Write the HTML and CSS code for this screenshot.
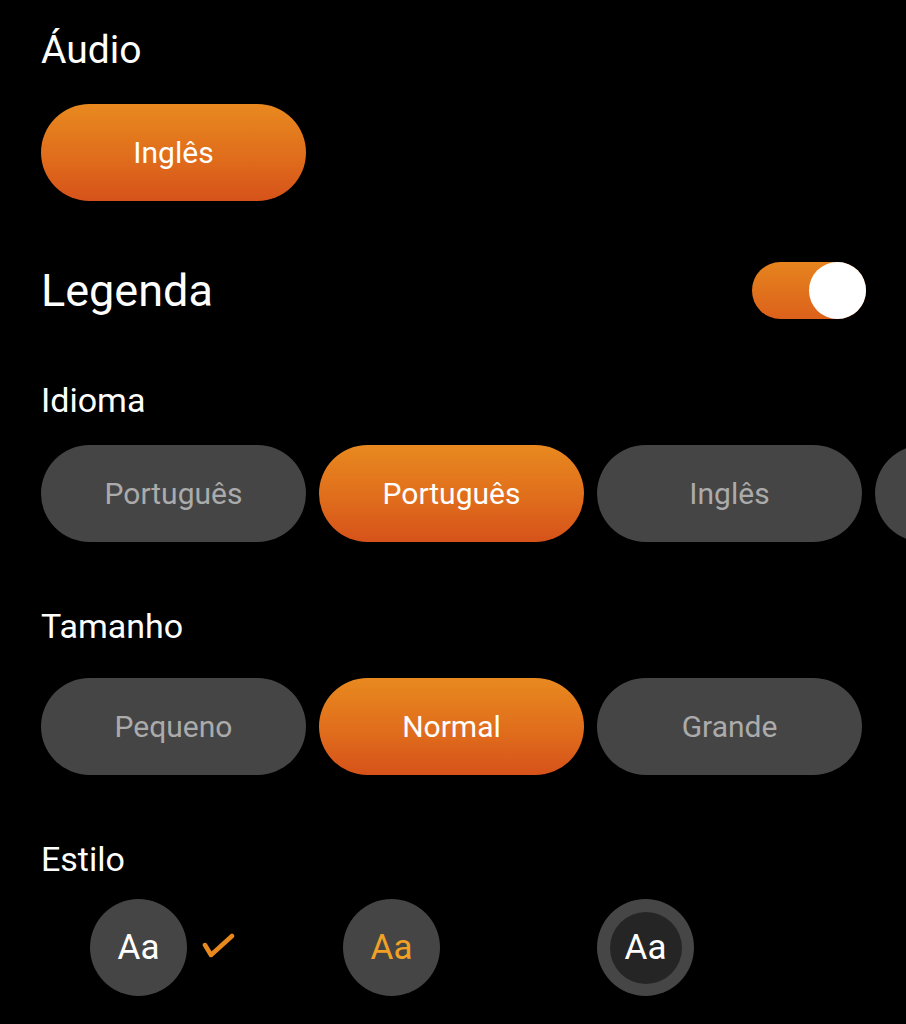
FILE: index.html
```html
<!DOCTYPE html>
<html lang="pt">
<head>
<meta charset="utf-8">
<title>Áudio e legenda</title>
<link rel="stylesheet" href="styles.css">
</head>
<body>
<main class="page">
  <h2 class="title-audio">Áudio</h2>
  <div class="chips chips-audio">
    <div class="chip active">Inglês</div>
  </div>

  <div class="legend-row">
    <h1 class="title-legend">Legenda</h1>
    <div class="toggle"><span class="knob"></span></div>
  </div>

  <h3 class="label label-idioma">Idioma</h3>
  <div class="chips chips-lang">
    <div class="chip">Português</div>
    <div class="chip active">Português</div>
    <div class="chip">Inglês</div>
    <div class="chip"></div>
  </div>

  <h3 class="label label-size">Tamanho</h3>
  <div class="chips chips-size">
    <div class="chip">Pequeno</div>
    <div class="chip active">Normal</div>
    <div class="chip">Grande</div>
  </div>

  <h3 class="label label-style">Estilo</h3>
  <div class="styles">
    <div class="style-item">
      <div class="style-circle">Aa</div>
      <svg class="check" width="35" height="26" viewBox="0 0 35 26"><polyline points="4,12 10,22 31,3" fill="none" stroke="#e8891e" stroke-width="4.5" stroke-linecap="round" stroke-linejoin="round"/></svg>
    </div>
    <div class="style-item">
      <div class="style-circle orange-text">Aa</div>
    </div>
    <div class="style-item">
      <div class="style-circle ring"><span class="inner">Aa</span></div>
    </div>
  </div>
</main>
</body>
</html>
```

FILE: styles.css
```css
html, body {
  margin: 0;
  padding: 0;
  background: #000;
}
body {
  font-family: Roboto, "Noto Sans", sans-serif;
  color: #fff;
  overflow: hidden;
  width: 906px;
  height: 1024px;
}
.page {
  padding: 27px 40px 0 41px;
}
h1, h2, h3 {
  margin: 0;
  font-weight: 400;
}
.title-audio {
  font-size: 39px;
  line-height: 46px;
  height: 46px;
}
.chips {
  display: flex;
  gap: 13px;
  margin-right: -40px;
  overflow: hidden;
}
.chips-audio {
  margin-top: 31px;
}
.chip {
  flex: 0 0 265px;
  height: 97px;
  border-radius: 48.5px;
  background: #454545;
  color: #ababab;
  font-size: 30px;
  display: flex;
  align-items: center;
  justify-content: center;
}
.chip.active {
  background: linear-gradient(180deg, #e8891f 0%, #e06d1c 55%, #d6521a 100%);
  color: #fff;
}
.legend-row {
  margin-top: 61px;
  height: 57px;
  display: flex;
  align-items: center;
  justify-content: space-between;
}
.title-legend {
  font-size: 45px;
  line-height: 56px;
}
.toggle {
  width: 114px;
  height: 57px;
  border-radius: 28.5px;
  background: linear-gradient(180deg, #e6841e 0%, #dc611b 100%);
  display: flex;
  justify-content: flex-end;
}
.knob {
  width: 57px;
  height: 57px;
  border-radius: 50%;
  background: #fff;
}
.label {
  font-size: 34px;
  line-height: 42px;
  height: 42px;
}
.label-idioma { margin-top: 60px; }
.chips-lang { margin-top: 24px; }
.label-size { margin-top: 63px; }
.chips-size { margin-top: 31px; }
.label-style { margin-top: 63px; }
.styles {
  margin-top: 19px;
  padding-left: 49px;
  display: grid;
  grid-template-columns: 253px 254px 97px;
}
.style-item {
  display: flex;
  align-items: center;
}
.style-circle {
  width: 97px;
  height: 97px;
  border-radius: 50%;
  background: #454545;
  color: #fff;
  font-size: 35px;
  display: flex;
  align-items: center;
  justify-content: center;
}
.style-circle.orange-text {
  color: #f1a124;
}
.style-circle.ring {
  background: #464646;
}
.style-circle .inner {
  width: 72px;
  height: 72px;
  border-radius: 50%;
  background: #252525;
  display: flex;
  align-items: center;
  justify-content: center;
}
.check {
  margin-left: 14px;
  margin-top: -4px;
}
```
